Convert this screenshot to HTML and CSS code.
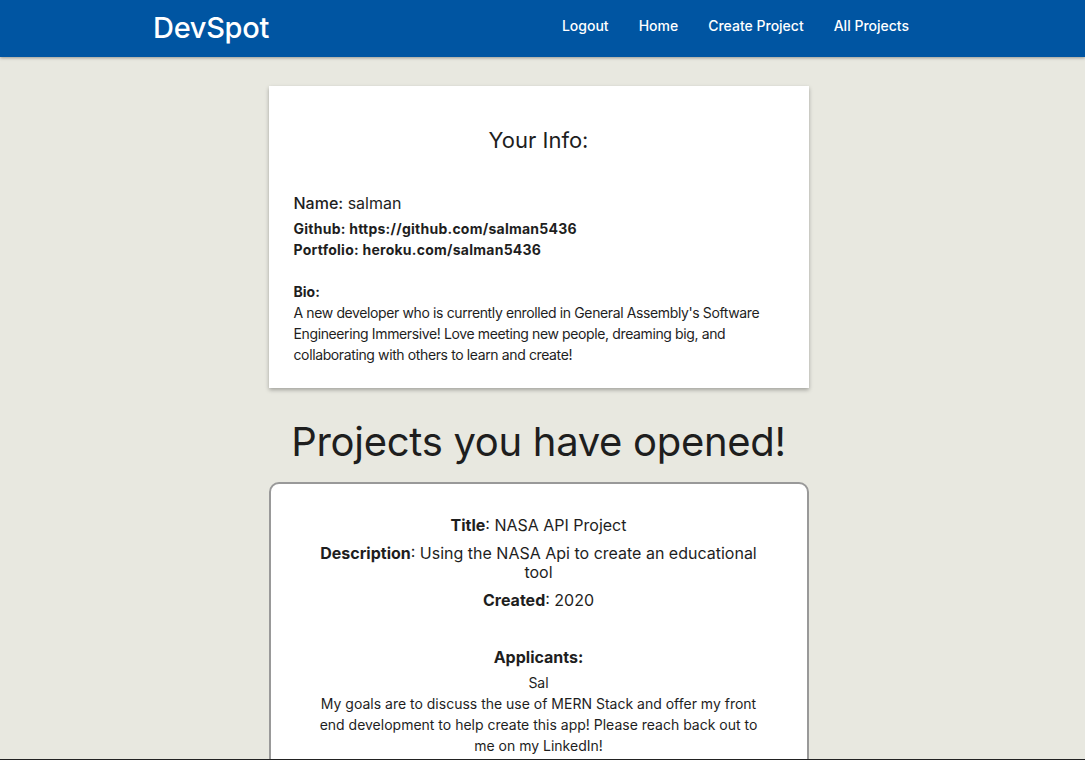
FILE: index.html
```html
<!DOCTYPE html>
<html>
<head>
<meta charset="utf-8">
<title>DevSpot</title>
<link rel="stylesheet" href="styles.css">
</head>
<body>
<header class="navbar">
  <div class="brand">DevSpot</div>
  <nav class="links">
    <a href="#">Logout</a>
    <a href="#">Home</a>
    <a href="#">Create Project</a>
    <a href="#">All Projects</a>
  </nav>
</header>
<main class="content">
  <section class="info-card">
    <h2 class="info-title">Your Info:</h2>
    <p class="name"><b>Name:</b> salman</p>
    <p class="link-line">Github: https://github.com/salman5436</p>
    <p class="link-line">Portfolio: heroku.com/salman5436</p>
    <div class="bio">
      <div class="bio-label">Bio:</div>
      <p>A new developer who is currently enrolled in General Assembly's Software Engineering Immersive! Love meeting new people, dreaming big, and collaborating with others to learn and create!</p>
    </div>
  </section>
  <h1 class="projects-title">Projects you have opened!</h1>
  <section class="project-card">
    <p class="field"><b>Title</b>: NASA API Project</p>
    <p class="field"><b>Description</b>: Using the NASA Api to create an educational tool</p>
    <p class="field"><b>Created</b>: 2020</p>
    <h3 class="applicants">Applicants:</h3>
    <div class="applicant">
      <div>Sal</div>
      <p>My goals are to discuss the use of MERN Stack and offer my front end development to help create this app! Please reach back out to me on my LinkedIn!</p>
    </div>
  </section>
</main>
</body>
</html>
```

FILE: styles.css
```css
html, body {
  margin: 0;
  padding: 0;
}
body {
  background: #e8e8e0;
  font-family: Inter, "Noto Sans", sans-serif;
  color: #1e1e1e;
  height: 760px;
  overflow: hidden;
  box-sizing: border-box;
  border-bottom: 1px solid #222;
}
.navbar {
  height: 57px;
  background: #0055a2;
  display: flex;
  align-items: center;
  justify-content: space-between;
  padding: 0 176px 0 153px;
  box-shadow: 0 1px 3px rgba(0,0,0,0.35);
  position: relative;
}
.brand {
  color: #fff;
  font-size: 29px;
  font-weight: 500;
  letter-spacing: -0.3px;
  margin-top: -2px;
}
.links {
  display: flex;
  gap: 30px;
  margin-top: -6px;
}
.links a {
  color: #fff;
  text-decoration: none;
  font-size: 14px;
  font-weight: 500;
}
.content {
  width: 540px;
  margin: 0 auto;
  padding-top: 29px;
  position: relative;
  left: -4px;
}
.info-card {
  background: #fff;
  box-shadow: 0 2px 4px rgba(0,0,0,0.3);
  padding: 40px 25px 25px;
  height: 302px;
  box-sizing: border-box;
}
.info-title {
  text-align: center;
  font-size: 22px;
  font-weight: 400;
  margin: 0 0 38px;
  line-height: 28px;
}
.name {
  margin: 0 0 4px;
  font-size: 16px;
  line-height: 22px;
}
.name b { font-weight: 500; }
.link-line {
  margin: 0;
  font-size: 14px;
  font-weight: 700;
  line-height: 21px;
  letter-spacing: 0.25px;
}
.bio {
  margin-top: 21px;
  font-size: 14px;
  line-height: 21px;
}
.bio-label { font-weight: 700; }
.bio p {
  margin: 0;
  letter-spacing: -0.38px;
}
.projects-title {
  text-align: center;
  font-size: 40px;
  font-weight: 400;
  margin: 29px 0 15px;
  line-height: 50px;
  letter-spacing: -0.3px;
}
.project-card {
  background: #fff;
  border: 2px solid #999;
  border-radius: 10px;
  padding: 32px 48px 20px;
  height: 320px;
  box-sizing: border-box;
  text-align: center;
}
.field {
  margin: 0 0 9px;
  font-size: 16px;
  line-height: 19px;
}
.field b { font-weight: 700; }
.applicants {
  font-size: 16px;
  font-weight: 700;
  margin: 37px 0 5px;
  line-height: 20px;
}
.applicant {
  font-size: 14px;
  line-height: 21px;
}
.applicant p { margin: 0; }
```
